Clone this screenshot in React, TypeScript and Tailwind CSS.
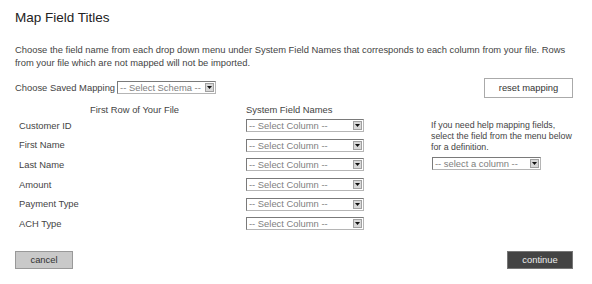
import React from "react";

function Sel({ label, w, className = "" }: { label: string; w: string; className?: string }) {
  return (
    <div
      className={`flex items-center justify-between h-[13px] border border-[#7a7a7a] border-b-[#b5b5b5] border-r-[#b5b5b5] bg-white pl-[2px] pr-[1px] shrink-0 ${w} ${className}`}
    >
      <span className="text-[#808080] leading-none whitespace-nowrap">{label}</span>
      <span className="flex items-center justify-center w-[9px] h-[9px] bg-[#d8d8d8] border border-[#a0a0a0]">
        <svg width="5" height="3" viewBox="0 0 5 3">
          <path d="M0 0 H5 L2.5 3 Z" fill="#111" />
        </svg>
      </span>
    </div>
  );
}

const rows = ["Customer ID", "First Name", "Last Name", "Amount", "Payment Type", "ACH Type"];

export default function App() {
  return (
    <div
      className="w-[592px] h-[284px] bg-white text-[#444] text-[9.4px] px-[15px] pt-[10px] relative"
      style={{ fontFamily: '"Liberation Sans", Arial, sans-serif' }}
    >
      <h1 className="text-[13.5px] leading-[16px] text-[#222]">Map Field Titles</h1>
      <p className="mt-[17px] leading-[13px] w-[560px]">
        Choose the field name from each drop down menu under System Field Names that corresponds to each column from your file. Rows from your file which are not mapped will not be imported.
      </p>
      <div className="flex items-center justify-between mt-[9px] h-[20px]">
        <div className="flex items-center gap-[2px]">
          <span>Choose Saved Mapping</span>
          <Sel label="-- Select Schema --" w="w-[99px]" />
        </div>
        <button className="w-[89px] h-[20px] border border-[#aaa] bg-white text-[#333] text-[9.4px] mr-[4px]">
          reset mapping
        </button>
      </div>
      <div className="flex">
        <div className="w-[231px] shrink-0 pl-[4px]">
          <div className="h-[18px] flex items-end justify-center pl-[4px] leading-[11px] pb-[1px]">First Row of Your File</div>
          {rows.map((r) => (
            <div key={r} className="h-[19.6px] flex items-center">
              {r}
            </div>
          ))}
        </div>
        <div className="w-[185px] shrink-0">
          <div className="h-[18px] flex items-end leading-[11px] pb-[1px]">System Field Names</div>
          {rows.map((r) => (
            <div key={r} className="h-[19.6px] flex items-center">
              <Sel label="-- Select Column --" w="w-[118px]" />
            </div>
          ))}
        </div>
        <div className="pt-[22px] shrink-0">
          <p className="leading-[11px] w-[146px] text-[8.8px]">
            If you need help mapping fields, select the field from the menu below for a definition.
          </p>
          <Sel label="-- select a column --" w="w-[109px]" className="mt-[4px] ml-[1px]" />
        </div>
      </div>
      <div className="flex justify-between mt-[17px] pr-[4px]">
        <button className="w-[58px] h-[18px] bg-[#c9c9c9] border border-[#999] text-[#333] text-[9.4px]">cancel</button>
        <button className="w-[66px] h-[18px] bg-[#444] border border-[#777] text-[#eee] text-[9.4px]">continue</button>
      </div>
    </div>
  );
}
